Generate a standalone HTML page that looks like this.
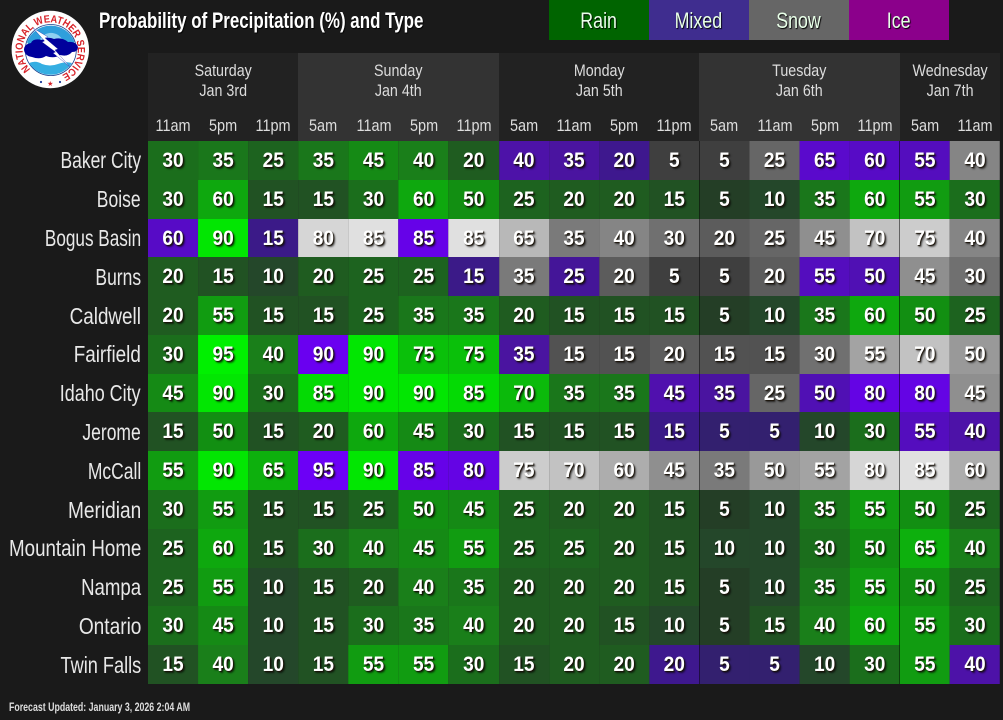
<!DOCTYPE html>
<html><head><meta charset="utf-8"><style>
html,body{margin:0;padding:0;background:#1a1a1a;width:1003px;height:720px;overflow:hidden}
body{position:relative;font-family:"Liberation Sans",sans-serif;color:#fff}
.a{position:absolute}
#title{left:99px;top:8px;font-size:22px;font-weight:bold;line-height:26px;white-space:nowrap;text-shadow:1px 1px 1px #000;transform:scaleX(.77);transform-origin:0 0}
.lg{position:absolute;top:0;height:40px;line-height:41px;text-align:center;font-size:22px;color:#e8ffe8;text-shadow:1px 1px 1px #000}
.lg span{display:inline-block;transform:scaleX(.81)}
.day{position:absolute;top:53px;height:88px;text-align:center;font-size:17px;line-height:20px;color:#ddd}
.day div{padding-top:8px;transform:scaleX(.84)}
.hr{position:absolute;top:114px;width:50.12px;text-align:center;font-size:17px;line-height:24px;color:#ddd;transform:scaleX(.85)}
.rl{position:absolute;right:862px;font-size:23px;line-height:38.79px;color:#e8e8e8;white-space:nowrap;transform:scaleX(.76);transform-origin:100% 0}
#g{position:absolute;left:148px;top:141px;width:936.4px;display:grid;grid-template-columns:repeat(17,55.08px);grid-auto-rows:38.79px;transform:scaleX(.91);transform-origin:0 0}
#g i{font-style:normal;font-weight:bold;font-size:21px;line-height:40px;text-align:center;color:#fff;text-shadow:1px 1px 1px #1a1208,2px 2px 2px rgba(0,0,0,.6)}
.vl{position:absolute;top:141px;height:543px;width:1px;background:rgba(0,0,0,.45)}
#f{left:9px;top:699px;font-size:12px;line-height:16px;font-weight:bold;color:#ddd;white-space:nowrap;transform:scaleX(.733);transform-origin:0 0}
.r5{background:#243e26}.r10{background:#24472a}.r15{background:#215223}.r20{background:#1f5c20}.r25{background:#1d631f}.r30{background:#1b6e1c}.r35{background:#1a771b}.r40{background:#1a7f1a}.r45{background:#158a15}.r50{background:#128f12}.r55{background:#119c11}.r60{background:#0ea80e}.r65{background:#0db00d}.r70{background:#0bba0b}.r75{background:#0ac00a}.r80{background:#07cc07}.r85{background:#04da04}.r90{background:#02e602}.r95{background:#00f000}
.m5{background:#33206f}.m15{background:#3b1a88}.m20{background:#3e188e}.m25{background:#441598}.m35{background:#4a14a0}.m40{background:#4d12a8}.m45{background:#5010ae}.m50{background:#5010b4}.m55{background:#540dbe}.m60{background:#570bc6}.m65{background:#5a0acc}.m80{background:#6404e4}.m85{background:#6602e8}.m90{background:#6a00f0}.m95{background:#6c00f6}
.s5{background:#3f3f3f}.s15{background:#525252}.s20{background:#5c5c5c}.s25{background:#666}.s30{background:#707070}.s35{background:#7a7a7a}.s40{background:#858585}.s45{background:#8f8f8f}.s50{background:#999}.s55{background:#a3a3a3}.s60{background:#adadad}.s65{background:#b8b8b8}.s70{background:#c2c2c2}.s75{background:#ccc}.s80{background:#d6d6d6}.s85{background:#e0e0e0}
</style></head><body>
<svg class="a" style="left:0;top:0" width="100" height="100" viewBox="0 0 100 100">
<circle cx="50.3" cy="49.5" r="38.7" fill="#fff"/>
<circle cx="50.8" cy="50" r="25.5" fill="#fff" stroke="#16408f" stroke-width=".8"/>
<path d="M27 42A25.5 25.5 0 0 1 74.6 42L70 48 30 48Z" fill="#2f9fdc"/>
<path d="M40 39A13 13 0 0 1 62 39L60 44 42 44Z" fill="#8fd0f0"/>
<path d="M29 63Q36 60 42 64Q50 67 58 64Q66 61 72 63A25.5 25.5 0 0 1 29 63Z" fill="#35aee2"/>
<path d="M24 50Q24 44 31 43Q33 38 42 40Q48 36 54 39Q62 37 68 42Q76 41 78 47Q78 52 72 52Q68 57 60 55Q54 59 46 56Q40 60 32 57Q25 56 24 50Z" fill="#00009c"/>
<path d="M33 28L48 37 45 38 58 49 55 50 70 67 53 53 55.5 52 42 42 44.5 41Z" fill="#fff" stroke="#00009c" stroke-width=".3"/>
<path id="ar" d="M30.5 69.3A27.6 27.6 0 1 1 63.4 74.2" fill="none"/>
<text font-family="Liberation Sans,sans-serif" font-weight="bold" font-size="10.5" fill="#d8232a"><textPath href="#ar" textLength="139" lengthAdjust="spacingAndGlyphs">NATIONAL WEATHER SERVICE</textPath></text>
<text x="50.3" y="86" text-anchor="middle" font-size="7" fill="#d8232a" font-family="DejaVu Sans,sans-serif">★</text>
<circle cx="41" cy="82" r="1.1" fill="#1a3a9a"/><circle cx="60" cy="82" r="1.1" fill="#1a3a9a"/>
</svg>
<div id="title" class="a">Probability of Precipitation (%) and Type</div>
<div class="lg" style="left:548.7px;width:100px;background:#006400"><span>Rain</span></div>
<div class="lg" style="left:648.7px;width:100px;background:#3f2d8f"><span>Mixed</span></div>
<div class="lg" style="left:748.7px;width:100px;background:#666"><span>Snow</span></div>
<div class="lg" style="left:848.7px;width:100px;background:#8b008b"><span>Ice</span></div>

<div class="day" style="left:148px;width:150.4px;background:#222"><div>Saturday<br>Jan 3rd</div></div>
<div class="day" style="left:298.4px;width:200.5px;background:#333"><div>Sunday<br>Jan 4th</div></div>
<div class="day" style="left:498.9px;width:200.5px;background:#222"><div>Monday<br>Jan 5th</div></div>
<div class="day" style="left:699.4px;width:200.5px;background:#333"><div>Tuesday<br>Jan 6th</div></div>
<div class="day" style="left:899.9px;width:100.2px;background:#222"><div>Wednesday<br>Jan 7th</div></div>

<div class="hr" style="left:148px">11am</div><div class="hr" style="left:198.1px">5pm</div><div class="hr" style="left:248.2px">11pm</div>
<div class="hr" style="left:298.4px">5am</div><div class="hr" style="left:348.5px">11am</div><div class="hr" style="left:398.6px">5pm</div><div class="hr" style="left:448.7px">11pm</div>
<div class="hr" style="left:498.9px">5am</div><div class="hr" style="left:549px">11am</div><div class="hr" style="left:599.1px">5pm</div><div class="hr" style="left:649.2px">11pm</div>
<div class="hr" style="left:699.4px">5am</div><div class="hr" style="left:749.5px">11am</div><div class="hr" style="left:799.6px">5pm</div><div class="hr" style="left:849.7px">11pm</div>
<div class="hr" style="left:899.9px">5am</div><div class="hr" style="left:950px">11am</div>

<div class="rl" style="top:141px">Baker City</div>
<div class="rl" style="top:180.3px">Boise</div>
<div class="rl" style="top:219px;transform:scaleX(.745)">Bogus Basin</div>
<div class="rl" style="top:257.8px">Burns</div>
<div class="rl" style="top:296.6px;transform:scaleX(.82)">Caldwell</div>
<div class="rl" style="top:335.4px;transform:scaleX(.82)">Fairfield</div>
<div class="rl" style="top:374.1px;transform:scaleX(.78)">Idaho City</div>
<div class="rl" style="top:412.9px">Jerome</div>
<div class="rl" style="top:451.7px">McCall</div>
<div class="rl" style="top:490.5px;transform:scaleX(.83)">Meridian</div>
<div class="rl" style="top:529.3px;transform:scaleX(.815)">Mountain Home</div>
<div class="rl" style="top:568.1px;transform:scaleX(.81)">Nampa</div>
<div class="rl" style="top:606.9px;transform:scaleX(.83)">Ontario</div>
<div class="rl" style="top:645.7px;transform:scaleX(.79)">Twin Falls</div>

<div id="g">
<i class="r30">30</i><i class="r35">35</i><i class="r25">25</i><i class="r35">35</i><i class="r45">45</i><i class="r40">40</i><i class="r20">20</i><i class="m40">40</i><i class="m35">35</i><i class="m20">20</i><i class="s5">5</i><i class="s5">5</i><i class="s25">25</i><i class="m65">65</i><i class="m60">60</i><i class="m55">55</i><i class="s40">40</i>
<i class="r30">30</i><i class="r60">60</i><i class="r15">15</i><i class="r15">15</i><i class="r30">30</i><i class="r60">60</i><i class="r50">50</i><i class="r25">25</i><i class="r20">20</i><i class="r20">20</i><i class="r15">15</i><i class="r5">5</i><i class="r10">10</i><i class="r35">35</i><i class="r60">60</i><i class="r55">55</i><i class="r30">30</i>
<i class="m60">60</i><i class="r90">90</i><i class="m15">15</i><i class="s80">80</i><i class="s85">85</i><i class="m85">85</i><i class="s85">85</i><i class="s65">65</i><i class="s35">35</i><i class="s40">40</i><i class="s30">30</i><i class="s20">20</i><i class="s25">25</i><i class="s45">45</i><i class="s70">70</i><i class="s75">75</i><i class="s40">40</i>
<i class="r20">20</i><i class="r15">15</i><i class="r10">10</i><i class="r20">20</i><i class="r25">25</i><i class="r25">25</i><i class="m15">15</i><i class="s35">35</i><i class="m25">25</i><i class="s20">20</i><i class="s5">5</i><i class="s5">5</i><i class="s20">20</i><i class="m55">55</i><i class="m50">50</i><i class="s45">45</i><i class="s30">30</i>
<i class="r20">20</i><i class="r55">55</i><i class="r15">15</i><i class="r15">15</i><i class="r25">25</i><i class="r35">35</i><i class="r35">35</i><i class="r20">20</i><i class="r15">15</i><i class="r15">15</i><i class="r15">15</i><i class="r5">5</i><i class="r10">10</i><i class="r35">35</i><i class="r60">60</i><i class="r50">50</i><i class="r25">25</i>
<i class="r30">30</i><i class="r95">95</i><i class="r40">40</i><i class="m90">90</i><i class="r90">90</i><i class="r75">75</i><i class="r75">75</i><i class="m35">35</i><i class="s15">15</i><i class="s15">15</i><i class="s20">20</i><i class="s15">15</i><i class="s15">15</i><i class="s30">30</i><i class="s55">55</i><i class="s70">70</i><i class="s50">50</i>
<i class="r45">45</i><i class="r90">90</i><i class="r30">30</i><i class="r85">85</i><i class="r90">90</i><i class="r90">90</i><i class="r85">85</i><i class="r70">70</i><i class="r35">35</i><i class="r35">35</i><i class="m45">45</i><i class="m35">35</i><i class="s25">25</i><i class="m50">50</i><i class="m80">80</i><i class="m80">80</i><i class="s45">45</i>
<i class="r15">15</i><i class="r50">50</i><i class="r15">15</i><i class="r20">20</i><i class="r60">60</i><i class="r45">45</i><i class="r30">30</i><i class="r15">15</i><i class="r15">15</i><i class="r15">15</i><i class="m15">15</i><i class="m5">5</i><i class="m5">5</i><i class="r10">10</i><i class="r30">30</i><i class="m55">55</i><i class="m40">40</i>
<i class="r55">55</i><i class="r90">90</i><i class="r65">65</i><i class="m95">95</i><i class="r90">90</i><i class="m85">85</i><i class="m80">80</i><i class="s75">75</i><i class="s70">70</i><i class="s60">60</i><i class="s45">45</i><i class="s35">35</i><i class="s50">50</i><i class="s55">55</i><i class="s80">80</i><i class="s85">85</i><i class="s60">60</i>
<i class="r30">30</i><i class="r55">55</i><i class="r15">15</i><i class="r15">15</i><i class="r25">25</i><i class="r50">50</i><i class="r45">45</i><i class="r25">25</i><i class="r20">20</i><i class="r20">20</i><i class="r15">15</i><i class="r5">5</i><i class="r10">10</i><i class="r35">35</i><i class="r55">55</i><i class="r50">50</i><i class="r25">25</i>
<i class="r25">25</i><i class="r60">60</i><i class="r15">15</i><i class="r30">30</i><i class="r40">40</i><i class="r45">45</i><i class="r55">55</i><i class="r25">25</i><i class="r25">25</i><i class="r20">20</i><i class="r15">15</i><i class="r10">10</i><i class="r10">10</i><i class="r30">30</i><i class="r50">50</i><i class="r65">65</i><i class="r40">40</i>
<i class="r25">25</i><i class="r55">55</i><i class="r10">10</i><i class="r15">15</i><i class="r20">20</i><i class="r40">40</i><i class="r35">35</i><i class="r20">20</i><i class="r20">20</i><i class="r20">20</i><i class="r15">15</i><i class="r5">5</i><i class="r10">10</i><i class="r35">35</i><i class="r55">55</i><i class="r50">50</i><i class="r25">25</i>
<i class="r30">30</i><i class="r45">45</i><i class="r10">10</i><i class="r15">15</i><i class="r30">30</i><i class="r35">35</i><i class="r40">40</i><i class="r20">20</i><i class="r20">20</i><i class="r15">15</i><i class="r10">10</i><i class="r5">5</i><i class="r15">15</i><i class="r40">40</i><i class="r60">60</i><i class="r55">55</i><i class="r30">30</i>
<i class="r15">15</i><i class="r40">40</i><i class="r10">10</i><i class="r15">15</i><i class="r55">55</i><i class="r55">55</i><i class="r30">30</i><i class="r15">15</i><i class="r20">20</i><i class="r20">20</i><i class="m20">20</i><i class="m5">5</i><i class="m5">5</i><i class="r10">10</i><i class="r30">30</i><i class="r55">55</i><i class="m40">40</i>
</div>
<div class="vl" style="left:699px"></div><div class="vl" style="left:899px"></div>
<div id="f" class="a">Forecast Updated: January 3, 2026 2:04 AM</div>
</body></html>
